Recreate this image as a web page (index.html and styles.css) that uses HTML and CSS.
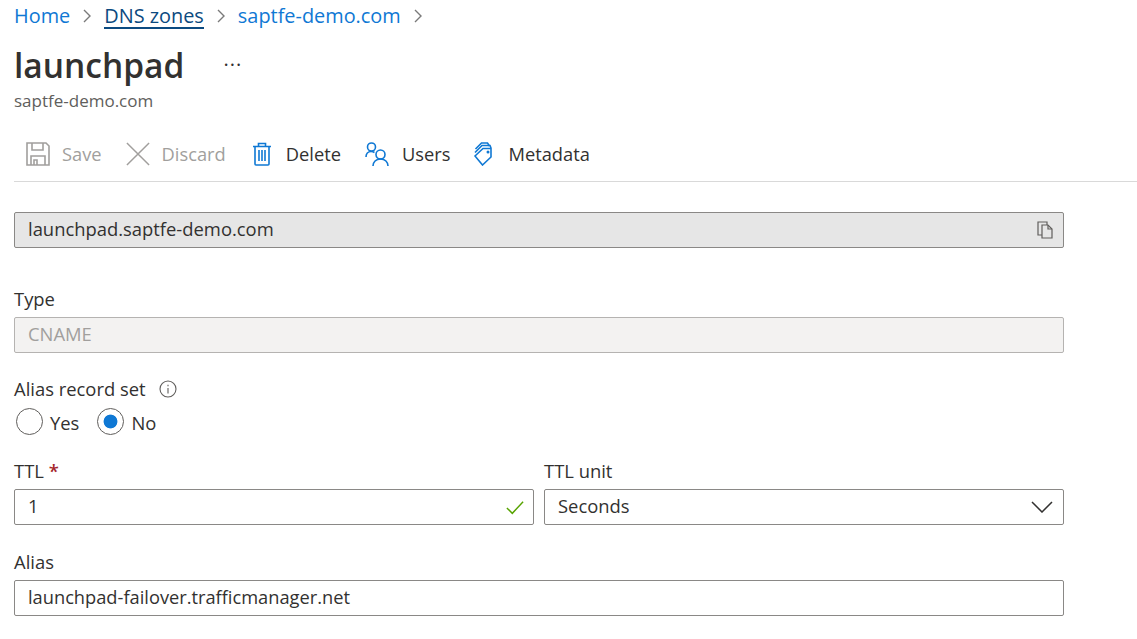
FILE: index.html
```html
<!DOCTYPE html>
<html lang="en">
<head>
  <meta charset="UTF-8">
  <title>launchpad - DNS record set</title>
  <link rel="stylesheet" href="styles.css">
</head>
<body>
  <nav class="breadcrumb">
    <a href="#">Home</a>
    <svg class="crumb-sep" viewBox="0 0 8 14"><path d="M1 1l6 6-6 6"/></svg>
    <a href="#" class="crumb-active">DNS zones</a>
    <svg class="crumb-sep" viewBox="0 0 8 14"><path d="M1 1l6 6-6 6"/></svg>
    <a href="#">saptfe-demo.com</a>
    <svg class="crumb-sep" viewBox="0 0 8 14"><path d="M1 1l6 6-6 6"/></svg>
  </nav>

  <div class="title-row">
    <h1>launchpad</h1>
    <span class="more">&middot;&middot;&middot;</span>
  </div>
  <div class="subtitle">saptfe-demo.com</div>

  <div class="toolbar">
    <span class="tool disabled">
      <svg class="tool-icon save-icon" viewBox="0 0 24 24">
        <path d="M1 1h19l3 3v19H1z"/>
        <path d="M6 1v7h11V1"/>
        <path d="M5 23v-9h14v9"/>
        <path d="M8 23v-5h3v5"/>
      </svg>
      Save
    </span>
    <span class="tool disabled discard">
      <svg class="tool-icon" viewBox="0 0 26 26"><path d="M1 1l24 24M25 1 1 25"/></svg>
      Discard
    </span>
    <span class="tool delete">
      <svg class="tool-icon blue" viewBox="0 0 20 24">
        <path d="M1 4.500h18M3 4.500V22a1 1 0 0 0 1 1h12a1 1 0 0 0 1-1V4.500"/>
        <path d="M6.500 4.500V1.500h7v3"/>
        <path d="M7 8v11M10 8v11M13 8v11"/>
      </svg>
      Delete
    </span>
    <span class="tool users">
      <svg class="tool-icon blue" viewBox="0 0 24 24">
        <circle cx="6.500" cy="5" r="4"/>
        <path d="M1 15c0-3 2-5.500 5-5.500 1.500 0 2.500.3 3.500 1"/>
        <circle cx="15.500" cy="12.500" r="4.500"/>
        <path d="M8 24c0-4 3-7 7.500-7s7.500 3 7.500 7"/>
      </svg>
      Users
    </span>
    <span class="tool metadata">
      <svg class="tool-icon blue" viewBox="0 0 18 24">
        <path d="M1.500 7 7.500 1h6l2 3"/>
        <path d="M1 10.500 8 3.500h8l1 2.500"/>
        <path d="M1 14 9 6.500h8V15l-8.500 8z"/>
        <circle cx="14" cy="10" r=".7"/>
      </svg>
      Metadata
    </span>
  </div>

  <div class="form">
    <div class="field name-field">
      <div class="input readonly">
        <span>launchpad.saptfe-demo.com</span>
        <svg class="copy-icon" viewBox="0 0 16 18">
          <path d="M10 4V1H1v13h4"/>
          <path d="M5 4h6l4 4v9H5z"/>
          <path d="M11 4v4h4"/>
        </svg>
      </div>
    </div>

    <label class="label type-label">Type</label>
    <div class="input disabled-input">CNAME</div>

    <label class="label alias-label">
      Alias record set
      <svg class="info-icon" viewBox="0 0 18 18">
        <circle cx="9" cy="9" r="8"/>
        <path d="M9 8v5.500M9 4.800v1.400"/>
      </svg>
    </label>
    <div class="radios">
      <span class="radio-item"><span class="radio"></span>Yes</span>
      <span class="radio-item"><span class="radio checked"></span>No</span>
    </div>

    <div class="ttl-row">
      <div class="ttl-col">
        <label class="label">TTL <span class="req">*</span></label>
        <div class="input">
          <span>1</span>
          <svg class="check-icon" viewBox="0 0 20 16"><path d="M1 8.500 7 14.500 19 1.500"/></svg>
        </div>
      </div>
      <div class="ttl-col">
        <label class="label">TTL unit</label>
        <div class="input">
          <span>Seconds</span>
          <svg class="chevron-icon" viewBox="0 0 22 12"><path d="M1 1l10 10L21 1"/></svg>
        </div>
      </div>
    </div>

    <label class="label target-label">Alias</label>
    <div class="input target-input">launchpad-failover.trafficmanager.net</div>
  </div>
</body>
</html>
```

FILE: styles.css
```css
body {
  margin: 0;
  padding: 0 0 0 14px;
  background-color: #fff;
  color: #323130;
  font-family: "Open Sans", "Noto Sans", sans-serif;
  font-size: 18.4px;
  overflow: hidden;
}

a {
  color: #0f78d4;
  text-decoration: none;
}

.breadcrumb {
  display: flex;
  align-items: center;
  height: 31px;
  margin-bottom: 13px;
  font-size: 19.9px;
}

.crumb-active {
  color: #0b4a80;
  border-bottom: 2px solid #0b4a80;
  line-height: 22px;
  margin-top: 2px;
}

.crumb-sep {
  width: 8px;
  height: 14px;
  margin: 0 13px;
}

.crumb-sep path {
  fill: none;
  stroke: #7a7a7a;
  stroke-width: 1.4;
}

.title-row {
  display: flex;
  align-items: center;
  height: 43px;
}

h1 {
  margin: 0;
  font-size: 33.5px;
  font-weight: 600;
  line-height: 43px;
}

.more {
  margin-left: 39px;
  margin-bottom: 2px;
  font-size: 20px;
  letter-spacing: 1px;
}

.subtitle {
  margin-top: 2px;
  height: 24px;
  line-height: 24px;
  font-size: 17px;
  color: #605e5c;
}

.toolbar {
  display: flex;
  align-items: center;
  height: 55px;
  margin-top: 13px;
  border-bottom: 1px solid #d9d9d9;
}

.tool {
  display: flex;
  align-items: center;
  gap: 12px;
  font-size: 18.3px;
}

.tool.disabled {
  color: #a19f9d;
}

.tool-icon {
  width: 24px;
  height: 24px;
  flex: none;
  fill: none;
  stroke: #a19f9d;
  stroke-width: 1.6;
}

.tool-icon.blue {
  stroke: #0f78d4;
}

.save-icon {
  margin-left: 12px;
}

.discard {
  margin-left: 24px;
}

.delete {
  margin-left: 25px;
  gap: 13px;
}

.delete .tool-icon {
  width: 22px;
}

.users {
  margin-left: 24px;
  gap: 13px;
}

.metadata {
  margin-left: 24px;
  gap: 16px;
}

.metadata .tool-icon {
  width: 18px;
}

.form {
  width: 1050px;
}

.name-field {
  margin-top: 30px;
  margin-bottom: 34px;
}

.label {
  display: flex;
  align-items: center;
  box-sizing: border-box;
  height: 35px;
  padding-bottom: 2px;
  gap: 5px;
}

.req {
  color: #a4262c;
  font-weight: 600;
}

.input {
  display: flex;
  align-items: center;
  justify-content: space-between;
  box-sizing: border-box;
  height: 36px;
  padding: 0 10px 3px 13px;
  border: 1px solid #8a8886;
  border-radius: 2px;
  background-color: #fff;
}

.input.readonly {
  background-color: #e6e6e6;
}

.disabled-input {
  background-color: #f3f2f1;
  border-color: #b5b3b1;
  color: #a19f9d;
}

.target-input {
  font-size: 18.25px;
}

.copy-icon {
  width: 16px;
  height: 18px;
  margin-bottom: -3px;
  fill: none;
  stroke: #605e5c;
  stroke-width: 1.2;
}

.alias-label {
  margin-top: 19px;
  gap: 13px;
}

.info-icon {
  width: 18px;
  height: 18px;
  fill: none;
  stroke: #605e5c;
  stroke-width: 1.1;
}

.radios {
  display: flex;
  gap: 18px;
  height: 30px;
  margin-left: 2px;
}

.radio-item {
  display: flex;
  align-items: center;
  gap: 7px;
}

.radio {
  box-sizing: border-box;
  width: 27px;
  height: 27px;
  margin-top: -2px;
  border: 1px solid #605e5c;
  border-radius: 50%;
  background-color: #fff;
}

.radio.checked {
  background: radial-gradient(circle, #0f78d4 0, #0f78d4 6.500px, #fff 7.300px);
}

.ttl-row {
  display: flex;
  gap: 10px;
  margin-top: 17px;
}

.ttl-col {
  flex: 1;
}

.check-icon {
  width: 18px;
  height: 15px;
  margin: 0 -1px -3px 0;
  fill: none;
  stroke: #57a300;
  stroke-width: 1.6;
}

.chevron-icon {
  width: 22px;
  height: 12px;
  margin-bottom: -3px;
  fill: none;
  stroke: #323130;
  stroke-width: 1.5;
}

.target-label {
  margin-top: 20px;
}
```
